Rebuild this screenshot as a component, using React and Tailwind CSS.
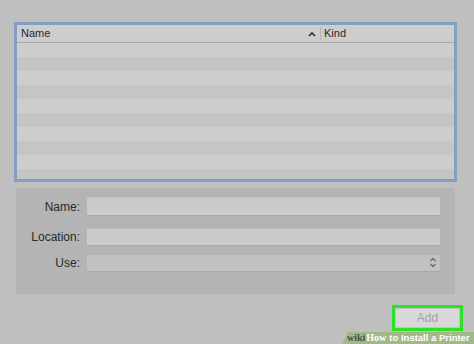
import React from 'react';

const rows = Array.from({ length: 10 }, (_, i) => i);

export default function App() {
  return (
    <div className="relative w-[474px] h-[344px] overflow-hidden bg-[#bfbfbf] font-['Liberation_Sans',Arial,sans-serif] text-[#2a2a2a]">
      <div className="pt-[22px] pl-[14px]">
        {/* printer list */}
        <div className="w-[443px] h-[160px] border-[3px] border-[#83a0c3] bg-[#cbcbcb] overflow-hidden">
          <div className="flex h-[18px] items-center bg-[#cdcdcd] border-b border-[#a9a9a9] text-[11px]">
            <div className="flex items-center w-[303px] pl-[4px] pr-[4px] h-full">
              <span>Name</span>
              <svg className="ml-auto" width="8" height="6" viewBox="0 0 8 6">
                <path d="M1 5 L4 2 L7 5" stroke="#333" strokeWidth="1.6" fill="none" />
              </svg>
            </div>
            <div className="h-[14px] w-px bg-[#b4b4b4]" />
            <div className="pl-[3px]">Kind</div>
          </div>
          {rows.map((r) => (
            <div key={r} className={r % 2 === 0 ? 'h-[14px] bg-[#cdcdcd]' : 'h-[14px] bg-[#c5c5c5]'} />
          ))}
        </div>
      </div>

      {/* details form */}
      <div className="ml-[16px] mt-[6px] w-[439px] h-[106px] bg-[#b4b4b4] pt-[9px] pr-[15px] text-[12px]">
        <div className="flex items-center">
          <div className="w-[64px] text-right">Name:</div>
          <div className="ml-[7px] flex-1 h-[19px] bg-[#cbcbcb] border-t border-[#bdbdbd] border-b border-b-[#a9a9a9]" />
        </div>
        <div className="flex items-center mt-[12px]">
          <div className="w-[64px] text-right">Location:</div>
          <div className="ml-[7px] flex-1 h-[18px] bg-[#cbcbcb] border-t border-[#bdbdbd] border-b border-b-[#a9a9a9]" />
        </div>
        <div className="flex items-center mt-[8px]">
          <div className="w-[64px] text-right">Use:</div>
          <div className="ml-[7px] flex-1 h-[17px] flex items-center justify-end pr-[3px] bg-[#c2c2c2] border-b border-[#a9a9a9] rounded-[2px]">
            <svg width="8" height="11" viewBox="0 0 8 11">
              <path d="M1.5 4 L4 1.5 L6.5 4 M1.5 7 L4 9.5 L6.5 7" stroke="#6a6a6a" strokeWidth="1.3" fill="none" />
            </svg>
          </div>
        </div>
      </div>

      {/* add button */}
      <div className="flex justify-end pr-[11px] mt-[11px]">
        <div className="w-[71px] h-[26px] border-[3px] border-[#2fe02a] bg-[#c4c4c4] p-px">
          <div className="h-full bg-[#d8d8d8] rounded-[2px] flex items-center justify-center text-[12px] text-[#a2a2a2]">
            Add
          </div>
        </div>
      </div>

      {/* watermark */}
      <div className="absolute right-0 bottom-0 w-[132px] h-[12px] bg-[#a2b886] [clip-path:polygon(6px_0,100%_0,100%_100%,0_100%)] flex items-center pl-[5px] text-[10px] leading-none whitespace-nowrap">
        <span className="font-['Liberation_Serif',serif] font-bold text-[#4d4d4d]">wiki</span>
        <span className="font-['Liberation_Serif',serif] font-bold text-white ml-[1px]">How</span>
        <span className="text-white ml-[3px] font-bold text-[9.5px]">to Install a Printer</span>
      </div>
    </div>
  );
}
